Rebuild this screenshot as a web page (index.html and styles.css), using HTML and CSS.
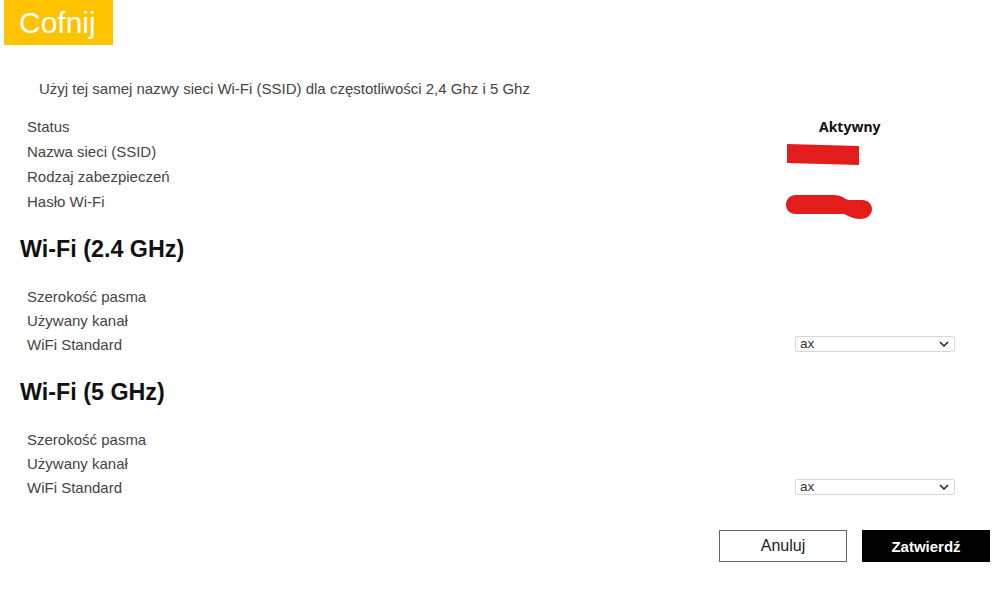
FILE: index.html
```html
<!doctype html>
<html lang="pl">
    <head>
        <meta charset="UTF-8" />
        <meta name="viewport" content="width=device-width, initial-scale=1.0" />
        <title>Ustawienia Wi-Fi</title>
        <link rel="stylesheet" href="styles.css">
    </head>
    <body>
        <div class="page">
            <button class="back-btn">Cofnij</button>

            <p class="notice">Użyj tej samej nazwy sieci Wi-Fi (SSID) dla częstotliwości 2,4 Ghz i 5 Ghz</p>

            <div class="rows main-rows">
                <div class="label">Status</div>
                <div class="value"><span class="status">Aktywny</span></div>

                <div class="label">Nazwa sieci (SSID)</div>
                <div class="value">
                    <svg class="redact redact-bar" width="75" height="24" viewBox="0 0 75 24">
                        <polygon points="1,1 73,3 73,22 1,20" fill="#e31c1c" />
                    </svg>
                </div>

                <div class="label">Rodzaj zabezpieczeń</div>
                <div class="value"></div>

                <div class="label">Hasło Wi-Fi</div>
                <div class="value">
                    <svg class="redact redact-blob" width="88" height="26" viewBox="0 0 88 26">
                        <path d="M10 1 H48 C54 1 58 4 62 6 H76 C82 6 86 10 86 15 C86 21 81 25 74 25 C67 25 63 22 58 20 H10 C4 20 0 16 0 11 C0 5 4 1 10 1 Z" fill="#e31c1c" />
                    </svg>
                </div>
            </div>

            <h2 class="section-title">Wi-Fi (2.4 GHz)</h2>
            <div class="rows band-rows">
                <div class="label">Szerokość pasma</div>
                <div class="value"></div>

                <div class="label">Używany kanał</div>
                <div class="value"></div>

                <div class="label">WiFi Standard</div>
                <div class="value">
                    <select class="std-select">
                        <option>ax</option>
                    </select>
                </div>
            </div>

            <h2 class="section-title section-title-5g">Wi-Fi (5 GHz)</h2>
            <div class="rows band-rows">
                <div class="label">Szerokość pasma</div>
                <div class="value"></div>

                <div class="label">Używany kanał</div>
                <div class="value"></div>

                <div class="label">WiFi Standard</div>
                <div class="value">
                    <select class="std-select">
                        <option>ax</option>
                    </select>
                </div>
            </div>

            <div class="actions">
                <button class="btn btn-cancel">Anuluj</button>
                <button class="btn btn-submit">Zatwierdź</button>
            </div>
        </div>
    </body>
</html>
```

FILE: styles.css
```css
* {
    margin: 0;
    padding: 0;
    box-sizing: border-box;
}

body {
    font-family: "Liberation Sans", Arial, sans-serif;
    background: white;
    color: #333;
}

.page {
    width: 999px;
}

.back-btn {
    display: block;
    margin-left: 4px;
    width: 109px;
    height: 45px;
    padding-left: 15px;
    text-align: left;
    border: none;
    background: #ffc300;
    color: white;
    font-family: "Liberation Sans", Arial, sans-serif;
    font-size: 30px;
    line-height: 45px;
}

.notice {
    margin-top: 34px;
    padding-left: 39px;
    font-size: 15px;
    line-height: 20px;
    color: #444;
}

.rows {
    display: grid;
    grid-template-columns: 759px 1fr;
    padding-left: 27px;
    font-size: 15px;
    color: #444;
}

.main-rows {
    margin-top: 15px;
    grid-auto-rows: 25px;
}

.band-rows {
    margin-top: 20px;
    grid-auto-rows: 24px;
}

.label,
.value {
    display: flex;
    align-items: center;
    white-space: nowrap;
}

.status {
    padding-left: 33px;
    font-family: "Noto Sans", sans-serif;
    font-weight: bold;
    font-size: 14px;
    color: #111;
}

.redact {
    display: block;
    flex-shrink: 0;
}

.redact-bar {
    margin-top: 6px;
}

.redact-blob {
    margin-top: 10px;
}

.section-title {
    margin-top: 20px;
    padding-left: 20px;
    font-size: 23.3px;
    line-height: 30px;
    font-weight: bold;
    color: #111;
}

.section-title-5g {
    margin-top: 21px;
}

.std-select {
    margin-left: 9px;
    width: 160px;
    height: 16px;
    padding: 0 4px;
    border: 1px solid #d8d8d8;
    border-radius: 2px;
    background: white url("data:image/svg+xml,<svg xmlns='http://www.w3.org/2000/svg' width='10' height='6' viewBox='0 0 10 6'><path d='M1 1 L5 5 L9 1' fill='none' stroke='%23222' stroke-width='1.5'/></svg>") no-repeat right 5px center;
    appearance: none;
    -webkit-appearance: none;
    font-family: "Liberation Sans", Arial, sans-serif;
    font-size: 13.5px;
    line-height: 14px;
    color: #333;
}

.actions {
    display: flex;
    justify-content: flex-end;
    gap: 15px;
    margin-top: 31px;
    padding-right: 9px;
}

.btn {
    width: 128px;
    height: 32px;
    font-family: "Liberation Sans", Arial, sans-serif;
    font-size: 16px;
    cursor: pointer;
}

.btn-cancel {
    background: white;
    border: 1px solid #666;
    color: #222;
}

.btn-submit {
    background: black;
    border: 1px solid black;
    color: white;
    font-weight: bold;
    font-size: 15px;
}
```
